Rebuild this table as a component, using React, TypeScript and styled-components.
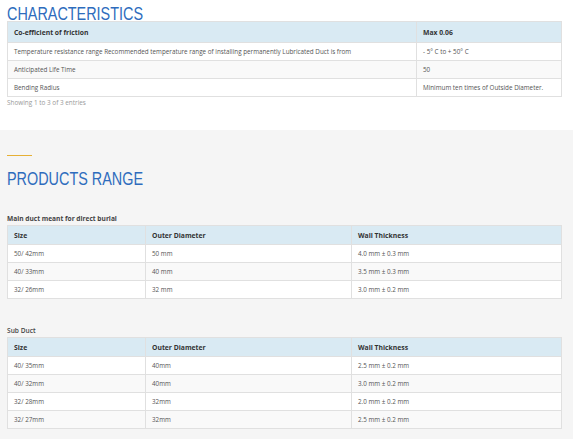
import React from "react";
import styled, { createGlobalStyle } from "styled-components";

const Global = createGlobalStyle`
  html, body { margin: 0; padding: 0; background: #ffffff; }
  body { font-family: "Open Sans", "Liberation Sans", sans-serif; }
  * { box-sizing: border-box; }
`;

const Page = styled.div`
  width: 573px;
  min-height: 439px;
  display: flex;
  flex-direction: column;
`;

const TopSection = styled.section`
  height: 130px;
  padding: 7px 11px 0 7px;
  background: #ffffff;
`;

const GreySection = styled.section`
  flex: 1;
  background: #f5f5f5;
  padding: 25px 11px 10px 7px;
`;

const Heading = styled.h2`
  margin: 0;
  font-family: "Liberation Sans", Arial, sans-serif;
  font-weight: 400;
  font-size: 18px;
  line-height: 14px;
  height: 14px;
  color: #2e6cbd;
  white-space: nowrap;
  transform: scaleX(0.8);
  transform-origin: left center;
`;

const Accent = styled.div`
  width: 25px;
  height: 1px;
  background: #e6b035;
  margin-bottom: 16px;
`;

const Table = styled.table`
  width: 555px;
  border-collapse: collapse;
  table-layout: fixed;
  font-size: 6.3px;
  color: #555;
`;

const Th = styled.th<{ $w?: string; $h?: number }>`
  width: ${(p) => p.$w ?? "auto"};
  height: ${(p) => p.$h ?? 19}px;
  background: #d9eaf3;
  border: 1px solid #e0e0e0;
  text-align: left;
  font-size: 6.8px;
  font-weight: 700;
  color: #333;
  padding: 0 6px;
  white-space: nowrap;
`;

const Tr = styled.tr`
  background: #ffffff;
  &:nth-child(even) {
    background: #f9f9f9;
  }
`;

const Td = styled.td`
  height: 18px;
  border: 1px solid #e0e0e0;
  padding: 0 6px;
  white-space: nowrap;
  overflow: hidden;
`;

const Info = styled.div`
  font-size: 6.4px;
  line-height: 9px;
  color: #999;
  margin-top: 1px;
`;

const Caption = styled.div<{ $bold?: boolean; $mt: number }>`
  font-size: 6.6px;
  line-height: 9px;
  margin-top: ${(p) => p.$mt}px;
  margin-bottom: 2px;
  font-weight: ${(p) => (p.$bold ? 700 : 600)};
  color: #444;
`;

const characteristics = [
  [
    "Temperature resistance range Recommended temperature range of installing permanently Lubricated Duct is from",
    "- 5° C to + 50° C",
  ],
  ["Anticipated Life Time", "50"],
  ["Bending Radius", "Minimum ten times of Outside Diameter."],
];

const mainDuct = [
  ["50/ 42mm", "50 mm", "4.0 mm ± 0.3 mm"],
  ["40/ 33mm", "40 mm", "3.5 mm ± 0.3 mm"],
  ["32/ 26mm", "32 mm", "3.0 mm ± 0.2 mm"],
];

const subDuct = [
  ["40/ 35mm", "40mm", "2.5 mm ± 0.2 mm"],
  ["40/ 32mm", "40mm", "3.0 mm ± 0.2 mm"],
  ["32/ 28mm", "32mm", "2.0 mm ± 0.2 mm"],
  ["32/ 27mm", "32mm", "2.5 mm ± 0.2 mm"],
];

function RangeTable({ rows }: { rows: string[][] }) {
  return (
    <Table>
      <thead>
        <tr>
          <Th $w="138px">Size</Th>
          <Th $w="206px">Outer Diameter</Th>
          <Th>Wall Thickness</Th>
        </tr>
      </thead>
      <tbody>
        {rows.map((r) => (
          <Tr key={r[0]}>
            {r.map((c, i) => (
              <Td key={i}>{c}</Td>
            ))}
          </Tr>
        ))}
      </tbody>
    </Table>
  );
}

export default function App() {
  return (
    <Page>
      <Global />
      <TopSection>
        <Heading>CHARACTERISTICS</Heading>
        <Table>
          <thead>
            <tr>
              <Th $w="409px" $h={21}>Co-efficient of friction</Th>
              <Th $h={21}>Max 0.06</Th>
            </tr>
          </thead>
          <tbody>
            {characteristics.map((r) => (
              <Tr key={r[0]}>
                <Td>{r[0]}</Td>
                <Td>{r[1]}</Td>
              </Tr>
            ))}
          </tbody>
        </Table>
        <Info>Showing 1 to 3 of 3 entries</Info>
      </TopSection>
      <GreySection>
        <Accent />
        <Heading>PRODUCTS RANGE</Heading>
        <Caption $bold $mt={28}>Main duct meant for direct burial</Caption>
        <RangeTable rows={mainDuct} />
        <Caption $mt={27}>Sub Duct</Caption>
        <RangeTable rows={subDuct} />
      </GreySection>
    </Page>
  );
}
